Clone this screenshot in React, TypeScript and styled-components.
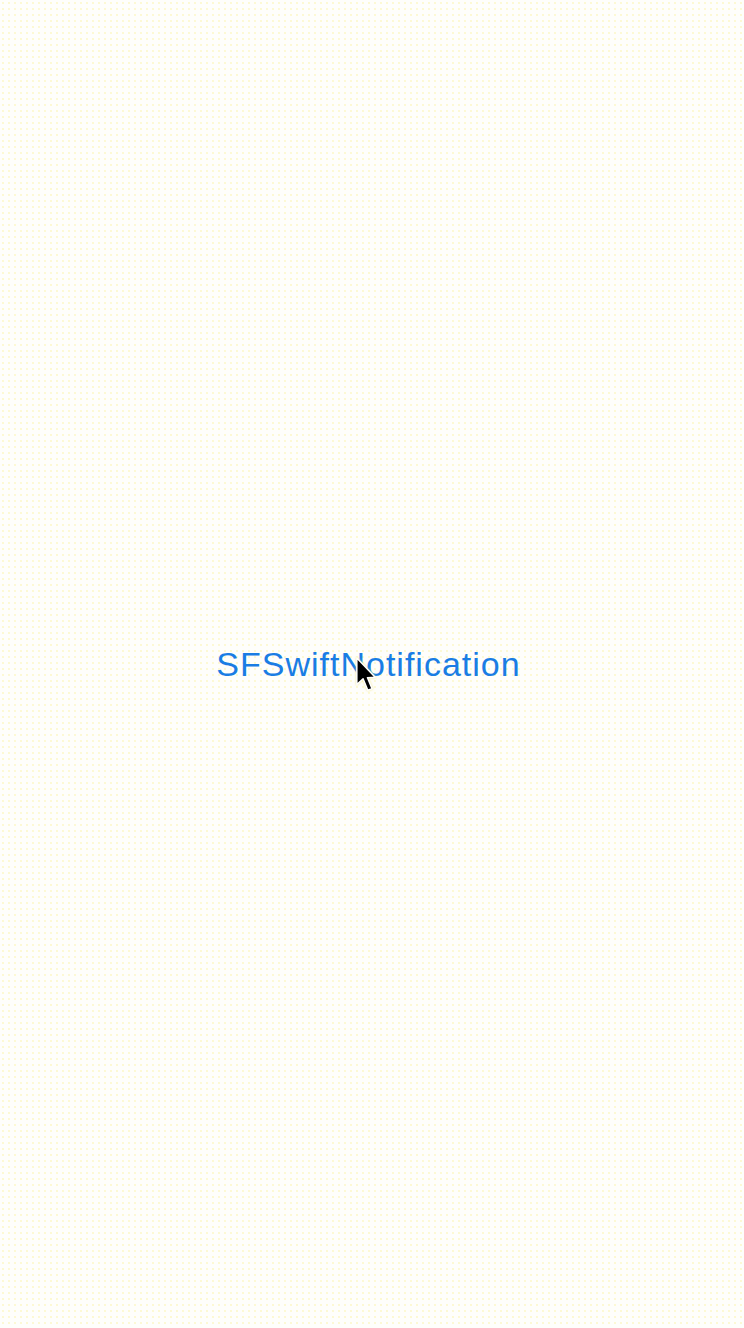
import React from 'react';
import styled, { createGlobalStyle } from 'styled-components';

const GlobalStyle = createGlobalStyle`
  html, body {
    margin: 0;
    padding: 0;
    background: #fefefb;
  }
`;

const Screen = styled.div`
  min-height: 100vh;
  display: flex;
  align-items: center;
  justify-content: center;
  background-color: #fefefb;
  background-image: radial-gradient(#fbf3a6 0.6px, transparent 0.8px);
  background-size: 6px 6px;
`;

const ButtonWrap = styled.div`
  position: relative;
  margin-right: 7px;
`;

const TitleButton = styled.button`
  display: block;
  border: 0;
  background: transparent;
  padding: 0;
  font-family: "Liberation Sans", Arial, sans-serif;
  font-size: 34px;
  letter-spacing: 1px;
  color: #1a7de4;
  cursor: pointer;
`;

const Pointer = styled.svg`
  position: absolute;
  left: 139px;
  top: 11px;
  width: 22px;
  height: 37px;
  filter: drop-shadow(0 0 1px rgba(240, 228, 120, 0.8));
`;

const App: React.FC = () => (
  <>
    <GlobalStyle />
    <Screen>
      <ButtonWrap>
        <TitleButton>SFSwiftNotification</TitleButton>
        <Pointer viewBox="0 0 12 20">
          <path
            d="M1 1 L1 15.5 L4.4 12.3 L7 18.6 L9.3 17.7 L6.8 11.7 L11 11.5 Z"
            fill="#000"
            stroke="#fff"
            strokeWidth="0.8"
            strokeLinejoin="round"
          />
        </Pointer>
      </ButtonWrap>
    </Screen>
  </>
);

export default App;
